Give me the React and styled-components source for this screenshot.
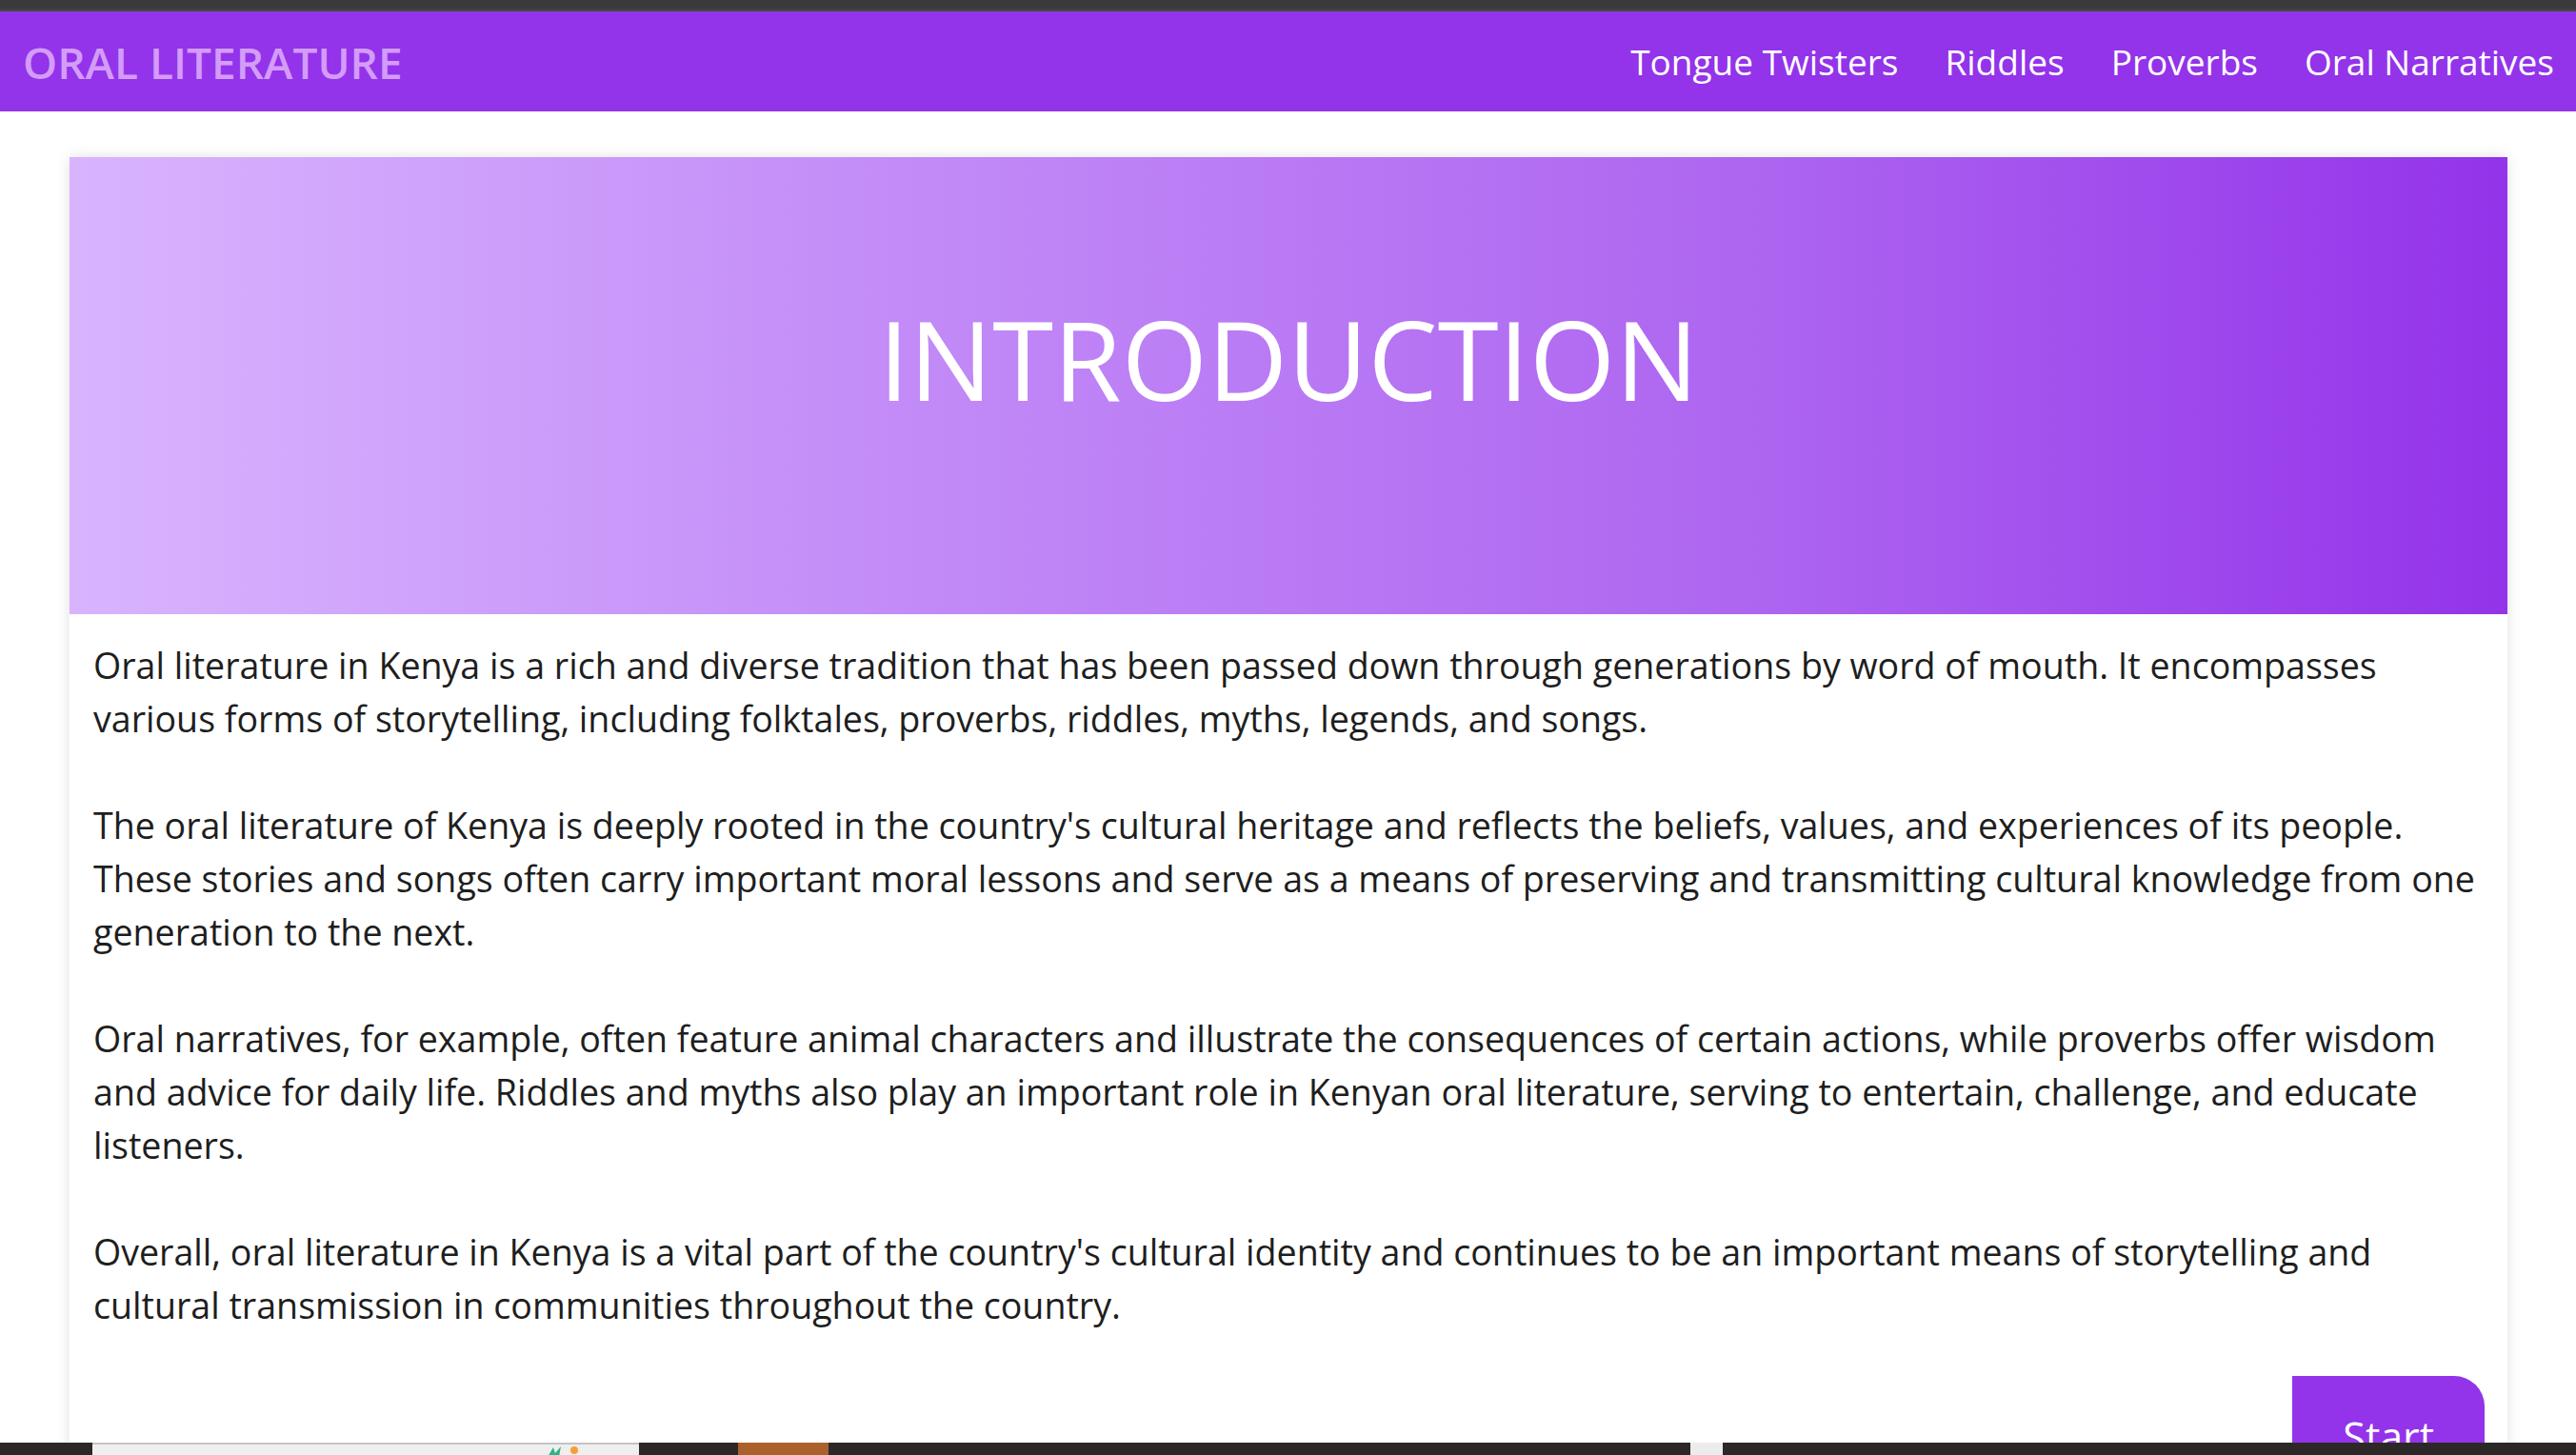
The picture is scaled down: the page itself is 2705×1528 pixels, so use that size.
import React from "react";
import styled, { createGlobalStyle } from "styled-components";

const GlobalStyle = createGlobalStyle`
  html, body {
    margin: 0;
    padding: 0;
    background: #ffffff;
    font-family: "Open Sans", "Noto Sans", sans-serif;
  }
  * { box-sizing: border-box; }
`;

const WindowEdge = styled.div`
  height: 12px;
  background: linear-gradient(#3a3a3a 0%, #3a3a3a 70%, #4a4a4a 100%);
`;

const NavBar = styled.nav`
  height: 105px;
  background: #9333ea;
  display: flex;
  align-items: center;
  justify-content: space-between;
  padding: 0 23px 0 24px;
`;

const Brand = styled.a`
  font-size: 46px;
  font-weight: 600;
  color: #d39cf9;
  text-decoration: none;
`;

const NavLinks = styled.ul`
  display: flex;
  gap: 49px;
  list-style: none;
  margin: 0;
  padding: 0;
`;

const NavLink = styled.a`
  font-size: 37px;
  color: #ffffff;
  text-decoration: none;
`;

const Main = styled.main`
  padding: 48px 72px 0 73px;
`;

const Card = styled.section`
  background: #ffffff;
  box-shadow: 0 0 14px rgba(0, 0, 0, 0.12);
  min-height: 1400px;
`;

const Hero = styled.header`
  height: 480px;
  background: linear-gradient(to right, #d8b4fe 0%, #c28af7 35%, #ad64f0 70%, #9333ea 100%);
  display: flex;
  align-items: center;
  justify-content: center;
  padding-bottom: 56px;
`;

const HeroTitle = styled.h1`
  margin: 0;
  font-size: 116px;
  font-weight: 400;
  color: #ffffff;
  line-height: 1.2;
`;

const Body = styled.div`
  padding: 26px 24px 0 25px;
  display: flex;
  flex-direction: column;
`;

const Paragraph = styled.p`
  margin: 0 0 56px;
  font-size: 37.6px;
  line-height: 56px;
  color: #1e1e1e;
  &:last-of-type { margin-bottom: 0; }
`;

const Actions = styled.div`
  display: flex;
  justify-content: flex-end;
  padding-top: 46px;
`;

const StartButton = styled.button`
  background: #9333ea;
  color: #ffffff;
  border: none;
  font-family: inherit;
  font-size: 43px;
  line-height: 56px;
  padding: 36px 53px;
  border-radius: 0 32px 0 32px;
  cursor: pointer;
`;

const Taskbar = styled.div`
  position: fixed;
  left: 0;
  right: 0;
  bottom: 0;
  height: 13px;
  background: #2c2828;
  display: flex;
  align-items: stretch;
`;

const TaskSlot = styled.div`
  flex: 0 0 ${(p) => p.$w}px;
  background: ${(p) => p.$bg || "transparent"};
  border-top: ${(p) => (p.$line ? "2px solid #c4c4c4" : "none")};
  position: relative;
`;

const TrayIcon = styled.svg`
  position: absolute;
  left: 476px;
  top: 1px;
`;

const links = ["Tongue Twisters", "Riddles", "Proverbs", "Oral Narratives"];

const paragraphs = [
  "Oral literature in Kenya is a rich and diverse tradition that has been passed down through generations by word of mouth. It encompasses various forms of storytelling, including folktales, proverbs, riddles, myths, legends, and songs.",
  "The oral literature of Kenya is deeply rooted in the country's cultural heritage and reflects the beliefs, values, and experiences of its people. These stories and songs often carry important moral lessons and serve as a means of preserving and transmitting cultural knowledge from one generation to the next.",
  "Oral narratives, for example, often feature animal characters and illustrate the consequences of certain actions, while proverbs offer wisdom and advice for daily life. Riddles and myths also play an important role in Kenyan oral literature, serving to entertain, challenge, and educate listeners.",
  "Overall, oral literature in Kenya is a vital part of the country's cultural identity and continues to be an important means of storytelling and cultural transmission in communities throughout the country.",
];

export default function App() {
  return (
    <>
      <GlobalStyle />
      <WindowEdge />
      <NavBar>
        <Brand href="#">ORAL LITERATURE</Brand>
        <NavLinks>
          {links.map((l) => (
            <li key={l}>
              <NavLink href="#">{l}</NavLink>
            </li>
          ))}
        </NavLinks>
      </NavBar>
      <Main>
        <Card>
          <Hero>
            <HeroTitle>INTRODUCTION</HeroTitle>
          </Hero>
          <Body>
            {paragraphs.map((p, i) => (
              <Paragraph key={i}>{p}</Paragraph>
            ))}
            <Actions>
              <StartButton>Start</StartButton>
            </Actions>
          </Body>
        </Card>
      </Main>
      <Taskbar>
        <TaskSlot $w={97} />
        <TaskSlot $w={574} $bg="#efefef" $line>
          <TrayIcon width="40" height="12" viewBox="0 0 40 12">
            <path d="M2 12 L8 2 L10 8 L16 1 L14 12 Z" fill="#2bb38a" />
            <circle cx="30" cy="5" r="4" fill="#f2a13a" />
          </TrayIcon>
        </TaskSlot>
        <TaskSlot $w={104} />
        <TaskSlot $w={95} $bg="#ab612b" />
        <TaskSlot $w={905} />
        <TaskSlot $w={34} $bg="#ececec" />
      </Taskbar>
    </>
  );
}
